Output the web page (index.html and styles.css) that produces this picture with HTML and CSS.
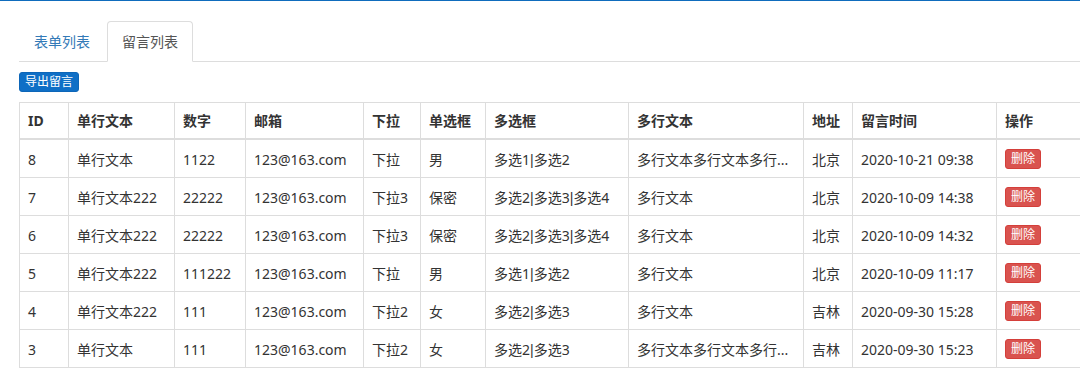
FILE: index.html
```html
<!DOCTYPE html>
<html lang="zh">
<head>
<meta charset="utf-8">
<title>留言列表</title>
<link rel="stylesheet" href="styles.css">
</head>
<body>
<div class="topline"></div>
<div class="page">
  <ul class="tabs">
    <li class="tab"><a href="#">表单列表</a></li>
    <li class="tab active"><a href="#">留言列表</a></li>
  </ul>
  <div class="toolbar"><button class="btn btn-primary">导出留言</button></div>
  <table class="grid">
    <colgroup>
      <col class="c-id"><col class="c-text"><col class="c-num"><col class="c-mail"><col class="c-sel"><col class="c-radio"><col class="c-check"><col class="c-multi"><col class="c-addr"><col class="c-time"><col class="c-op">
    </colgroup>
    <thead>
      <tr><th>ID</th><th>单行文本</th><th>数字</th><th>邮箱</th><th>下拉</th><th>单选框</th><th>多选框</th><th>多行文本</th><th>地址</th><th>留言时间</th><th>操作</th></tr>
    </thead>
    <tbody>
      <tr><td>8</td><td>单行文本</td><td>1122</td><td>123@163.com</td><td>下拉</td><td>男</td><td>多选1<span class="sep">|</span>多选2</td><td>多行文本多行文本多行...</td><td>北京</td><td>2020-10-21 09:38</td><td><button class="btn btn-danger">删除</button></td></tr>
      <tr><td>7</td><td>单行文本222</td><td>22222</td><td>123@163.com</td><td>下拉3</td><td>保密</td><td>多选2<span class="sep">|</span>多选3<span class="sep">|</span>多选4</td><td>多行文本</td><td>北京</td><td>2020-10-09 14:38</td><td><button class="btn btn-danger">删除</button></td></tr>
      <tr><td>6</td><td>单行文本222</td><td>22222</td><td>123@163.com</td><td>下拉3</td><td>保密</td><td>多选2<span class="sep">|</span>多选3<span class="sep">|</span>多选4</td><td>多行文本</td><td>北京</td><td>2020-10-09 14:32</td><td><button class="btn btn-danger">删除</button></td></tr>
      <tr><td>5</td><td>单行文本222</td><td>111222</td><td>123@163.com</td><td>下拉</td><td>男</td><td>多选1<span class="sep">|</span>多选2</td><td>多行文本</td><td>北京</td><td>2020-10-09 11:17</td><td><button class="btn btn-danger">删除</button></td></tr>
      <tr><td>4</td><td>单行文本222</td><td>111</td><td>123@163.com</td><td>下拉2</td><td>女</td><td>多选2<span class="sep">|</span>多选3</td><td>多行文本</td><td>吉林</td><td>2020-09-30 15:28</td><td><button class="btn btn-danger">删除</button></td></tr>
      <tr><td>3</td><td>单行文本</td><td>111</td><td>123@163.com</td><td>下拉2</td><td>女</td><td>多选2<span class="sep">|</span>多选3</td><td>多行文本多行文本多行...</td><td>吉林</td><td>2020-09-30 15:23</td><td><button class="btn btn-danger">删除</button></td></tr>
    </tbody>
  </table>
</div>
</body>
</html>
```
FILE: styles.css
```css
html, body {
  margin: 0;
  padding: 0;
  background: #fff;
  overflow: hidden;
}
body {
  font-family: "Noto Sans", "Noto Sans CJK SC", sans-serif;
  font-size: 14px;
  color: #333;
}
.topline {
  height: 1px;
  background: #0f6cbd;
}
.page {
  padding: 20px 0 0 19px;
  overflow: hidden;
}
.tabs {
  list-style: none;
  margin: 0;
  padding: 0;
  display: flex;
  border-bottom: 1px solid #ddd;
}
.tab {
  margin-bottom: -1px;
  margin-right: 2px;
}
.tab a {
  display: block;
  padding: 10px 14px;
  line-height: 19px;
  border: 1px solid transparent;
  border-radius: 4px 4px 0 0;
  color: #337ab7;
  text-decoration: none;
}
.tab.active a {
  color: #555;
  background: #fff;
  border-color: #ddd #ddd transparent;
}
.toolbar {
  padding: 10px 0;
}
.btn {
  display: inline-block;
  font-family: inherit;
  font-size: 12px;
  line-height: 18px;
  height: 20px;
  padding: 0 5px;
  border: 1px solid transparent;
  border-radius: 3px;
  color: #fff;
  cursor: pointer;
  vertical-align: top;
}
.btn-primary {
  background: #0f6fc6;
  border-color: #0d66b8;
}
.btn-danger {
  background: #d9534f;
  border-color: #d43f3a;
}
.grid {
  border-collapse: collapse;
  table-layout: fixed;
  width: 1097px;
  border: 1px solid #ddd;
}
.c-id { width: 49px; }
.c-text { width: 106px; }
.c-num { width: 71px; }
.c-mail { width: 118px; }
.c-sel { width: 57px; }
.c-radio { width: 65px; }
.c-check { width: 143px; }
.c-multi { width: 175px; }
.c-addr { width: 49px; }
.c-time { width: 144px; }
.c-op { width: 120px; }
.grid th, .grid td {
  border: 1px solid #ddd;
  text-align: left;
  white-space: nowrap;
  overflow: hidden;
}
.grid th {
  padding: 8px;
  line-height: 19px;
  font-weight: bold;
  border-bottom-width: 2px;
}
.grid td {
  padding: 9px 8px 7px;
  line-height: 21px;
}
.sep {
  font-family: "Liberation Sans", sans-serif;
  line-height: 1;
}
```
